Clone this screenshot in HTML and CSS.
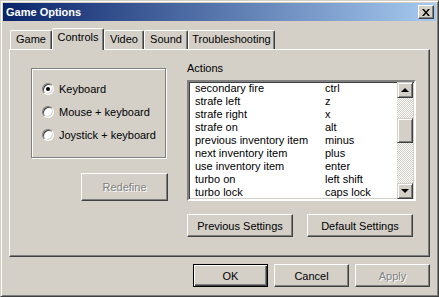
FILE: index.html
```html
<!DOCTYPE html>
<html>
<head>
    <title>Game Options</title>
    <link rel="stylesheet" href="styles.css">
</head>
<body>
    <div class="window">
        <div class="titlebar">
            <span class="title">Game Options</span>
            <button class="close-btn" title="Close">
                <svg width="8" height="7" viewBox="0 0 8 7">
                    <path d="M0 0h2l2 2.5 2-2.5h2l-3 3.5 3 3.5h-2l-2-2.5-2 2.5h-2l3-3.5z" fill="#000"/>
                </svg>
            </button>
        </div>

        <div class="content">
            <div class="tabs">
                <div class="tab tab-game">Game</div>
                <div class="tab tab-controls active">Controls</div>
                <div class="tab tab-video">Video</div>
                <div class="tab tab-sound">Sound</div>
                <div class="tab tab-trouble">Troubleshooting</div>
            </div>

            <div class="panel">
                <div class="left-col">
                    <div class="radio-box">
                        <label class="radio"><span class="radio-dot checked"></span>Keyboard</label>
                        <label class="radio"><span class="radio-dot"></span>Mouse + keyboard</label>
                        <label class="radio"><span class="radio-dot"></span>Joystick + keyboard</label>
                    </div>
                    <button class="btn btn-redefine" disabled>Redefine</button>
                </div>

                <div class="right-col">
                    <div class="actions-label">Actions</div>
                    <div class="listbox">
                        <div class="rows">
                            <div class="row"><span>secondary fire</span><span>ctrl</span></div>
                            <div class="row"><span>strafe left</span><span>z</span></div>
                            <div class="row"><span>strafe right</span><span>x</span></div>
                            <div class="row"><span>strafe on</span><span>alt</span></div>
                            <div class="row"><span>previous inventory item</span><span>minus</span></div>
                            <div class="row"><span>next inventory item</span><span>plus</span></div>
                            <div class="row"><span>use inventory item</span><span>enter</span></div>
                            <div class="row"><span>turbo on</span><span>left shift</span></div>
                            <div class="row"><span>turbo lock</span><span>caps lock</span></div>
                        </div>
                        <div class="scrollbar">
                            <div class="scroll-btn"><span class="arrow-up"></span></div>
                            <div class="track track-top"></div>
                            <div class="thumb"></div>
                            <div class="track track-bottom"></div>
                            <div class="scroll-btn"><span class="arrow-down"></span></div>
                        </div>
                    </div>
                    <div class="settings-btns">
                        <button class="btn btn-settings">Previous Settings</button>
                        <button class="btn btn-settings">Default Settings</button>
                    </div>
                </div>
            </div>

            <div class="dialog-btns">
                <button class="btn btn-dialog btn-default">OK</button>
                <button class="btn btn-dialog">Cancel</button>
                <button class="btn btn-dialog" disabled>Apply</button>
            </div>
        </div>
    </div>
</body>
</html>
```

FILE: styles.css
```css
* {
    box-sizing: border-box;
}
body {
    margin: 0;
    font-family: "Liberation Sans", Arial, sans-serif;
    font-size: 11px;
    color: #000;
    background-color: #d4d0c8;
}

/* window frame */
.window {
    width: 439px;
    height: 297px;
    background-color: #d4d0c8;
    border: 1px solid;
    border-color: #d4d0c8 #404040 #404040 #d4d0c8;
    box-shadow: inset 1px 1px #fff, inset -1px -1px #808080;
    padding: 2px;
    display: flex;
    flex-direction: column;
}
.titlebar {
    height: 18px;
    background: linear-gradient(to right, #0a246a, #a6caf0);
    display: flex;
    align-items: center;
    justify-content: space-between;
    padding: 0 2px 0 3px;
}
.title {
    color: #fff;
    font-weight: bold;
    font-size: 11px;
}
.close-btn {
    width: 16px;
    height: 14px;
    padding: 0;
    background-color: #d4d0c8;
    border: 1px solid;
    border-color: #fff #404040 #404040 #fff;
    box-shadow: inset -1px -1px #808080;
    display: flex;
    align-items: center;
    justify-content: center;
}

.content {
    flex: 1;
    padding: 7px 6px 0 6px;
    display: flex;
    flex-direction: column;
}

/* tabs */
.tabs {
    display: flex;
    align-items: flex-end;
    height: 21px;
    padding-left: 1px;
}
.tab {
    height: 19px;
    line-height: 17px;
    text-align: center;
    border: 1px solid;
    border-bottom: none;
    border-color: #fff #404040 transparent #fff;
    box-shadow: inset -1px 0 #808080;
    border-radius: 2px 2px 0 0;
}
.tab-game { width: 42px; }
.tab-controls { width: 52px; }
.tab-video { width: 40px; }
.tab-sound { width: 44px; }
.tab-trouble { width: 87px; }
.tab.active {
    height: 22px;
    line-height: 17px;
    margin-bottom: -1px;
    background-color: #d4d0c8;
    position: relative;
    z-index: 1;
}

/* tab page */
.panel {
    height: 208px;
    border: 1px solid;
    border-color: #fff #404040 #404040 #fff;
    box-shadow: inset -1px -1px #808080;
    display: flex;
    align-items: flex-start;
    padding: 12px 0 0 21px;
}
.left-col {
    width: 137px;
    margin-top: 6px;
    display: flex;
    flex-direction: column;
}
.radio-box {
    width: 135px;
    height: 90px;
    border: 1px solid #808080;
    box-shadow: inset 1px 1px #fff, 1px 1px #fff;
    padding: 13px 0 0 10px;
    display: flex;
    flex-direction: column;
    gap: 9px;
}
.radio {
    display: flex;
    align-items: center;
    gap: 5px;
    height: 14px;
}
.radio-dot {
    width: 12px;
    height: 12px;
    border-radius: 50%;
    background-color: #fff;
    border: 1px solid;
    border-color: #808080 #fff #fff #808080;
    box-shadow: inset 1px 1px #404040, inset -1px -1px #d4d0c8;
    display: flex;
    align-items: center;
    justify-content: center;
}
.radio-dot.checked::after {
    content: "";
    width: 4px;
    height: 4px;
    border-radius: 50%;
    background-color: #000;
}

.btn {
    font-family: "Liberation Sans", Arial, sans-serif;
    font-size: 11px;
    color: #000;
    background-color: #d4d0c8;
    border: 1px solid;
    border-color: #fff #404040 #404040 #fff;
    box-shadow: inset -1px -1px #808080;
    padding: 0;
}
.btn:disabled {
    color: #808080;
    text-shadow: 1px 1px #fff;
}
.btn-redefine {
    width: 87px;
    height: 28px;
    margin: 15px 0 0 50px;
}

.right-col {
    width: 229px;
    margin-left: 19px;
}
.actions-label {
    line-height: 13px;
    height: 13px;
}
.listbox {
    margin-top: 5px;
    height: 121px;
    background-color: #fff;
    border: 2px solid;
    border-color: #808080 #fff #fff #808080;
    box-shadow: inset 1px 1px #404040, inset -1px -1px #d4d0c8;
    display: flex;
}
.rows {
    flex: 1;
    padding: 0 0 0 6px;
}
.row {
    display: grid;
    grid-template-columns: 130px 1fr;
    height: 13px;
    line-height: 13px;
    white-space: nowrap;
}

/* scrollbar */
.scrollbar {
    width: 16px;
    margin-right: 1px;
    display: flex;
    flex-direction: column;
}
.scroll-btn {
    height: 16px;
    background-color: #d4d0c8;
    border: 1px solid;
    border-color: #d4d0c8 #404040 #404040 #d4d0c8;
    box-shadow: inset 1px 1px #fff, inset -1px -1px #808080;
    display: flex;
    align-items: center;
    justify-content: center;
}
.arrow-up {
    width: 0;
    height: 0;
    border-left: 4px solid transparent;
    border-right: 4px solid transparent;
    border-bottom: 4px solid #000;
}
.arrow-down {
    width: 0;
    height: 0;
    border-left: 4px solid transparent;
    border-right: 4px solid transparent;
    border-top: 4px solid #000;
}
.track {
    background: repeating-conic-gradient(#fff 0 25%, #d4d0c8 0 50%) 0 0 / 2px 2px;
}
.track-top {
    height: 20px;
}
.thumb {
    height: 25px;
    background-color: #d4d0c8;
    border: 1px solid;
    border-color: #d4d0c8 #404040 #404040 #d4d0c8;
    box-shadow: inset 1px 1px #fff, inset -1px -1px #808080;
}
.track-bottom {
    flex: 1;
}

.settings-btns {
    margin-top: 13px;
    display: flex;
    gap: 14px;
}
.btn-settings {
    width: 106px;
    height: 23px;
}

/* OK / Cancel / Apply */
.dialog-btns {
    margin-top: 7px;
    display: flex;
    justify-content: flex-end;
    gap: 6px;
}
.btn-dialog {
    width: 75px;
    height: 23px;
}
.btn-default {
    border: 1px solid #000;
    box-shadow: inset 1px 1px #fff, inset -1px -1px #404040, inset -2px -2px #808080;
}
```
